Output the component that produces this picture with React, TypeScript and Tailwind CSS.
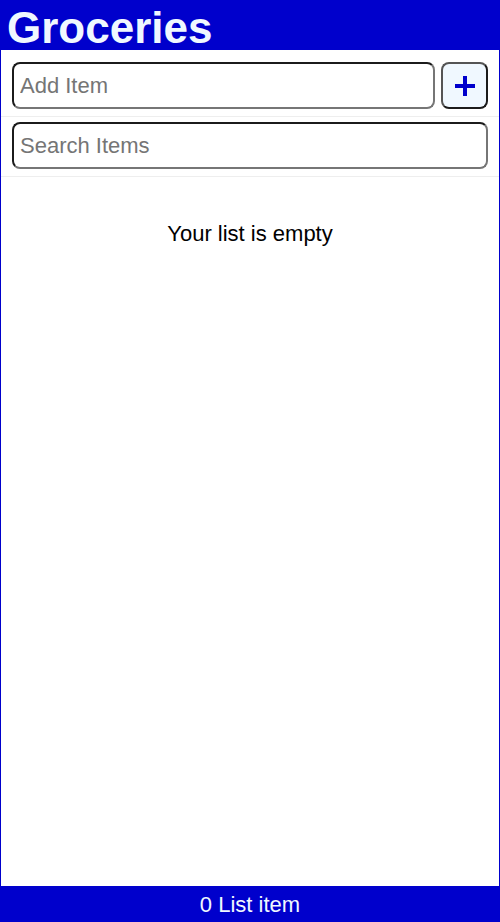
const PlusIcon = () => (
  <svg width="20" height="20" viewBox="0 0 20 20" aria-hidden="true">
    <rect x="8" y="0" width="4" height="20" fill="#0000cc" />
    <rect x="0" y="8" width="20" height="4" fill="#0000cc" />
  </svg>
);

const inputCls =
  "w-full h-[47px] rounded-lg border-2 border-t-[#1b1b1b] border-l-[#1b1b1b] border-b-[#767676] border-r-[#767676] bg-white px-[6px] text-[22px] text-black placeholder:text-[#757575] outline-none";

export default function App() {
  return (
    <div
      className="flex flex-col h-[922px] w-full border border-[#0000cc] bg-white"
      style={{ fontFamily: '"Liberation Sans", Arial, sans-serif' }}
    >
      {/* Header */}
      <header className="h-[49px] bg-[#0000cc] pl-[6px]">
        <h1 className="text-[44px] font-bold leading-[49px] pt-[2px] text-[#f0f8ff]">
          Groceries
        </h1>
      </header>

      <main className="flex-1 flex flex-col">
        {/* Add item */}
        <form
          className="flex gap-[6px] px-[11px] pt-3 pb-[7px] border-b border-[#eeeeee]"
          onSubmit={(e) => e.preventDefault()}
        >
          <input type="text" placeholder="Add Item" className={inputCls} />
          <button
            type="submit"
            aria-label="Add Item"
            className="shrink-0 w-[47px] h-[47px] flex items-center justify-center rounded-lg border-2 border-t-[#555555] border-l-[#555555] border-b-[#1b1b1b] border-r-[#1b1b1b] bg-[#f0f8ff]"
          >
            <PlusIcon />
          </button>
        </form>

        {/* Search */}
        <form
          className="px-[11px] pt-[5px] pb-[7px] border-b border-[#eeeeee]"
          onSubmit={(e) => e.preventDefault()}
        >
          <input type="text" placeholder="Search Items" className={inputCls} />
        </form>

        <p className="mt-[40px] text-center text-[22px] text-black">Your list is empty</p>
      </main>

      {/* Footer */}
      <footer className="h-[35px] bg-[#0000cc] flex items-center justify-center pt-[2px]">
        <p className="text-[22px] text-[#f0f8ff] leading-none">0 List item</p>
      </footer>
    </div>
  );
}
